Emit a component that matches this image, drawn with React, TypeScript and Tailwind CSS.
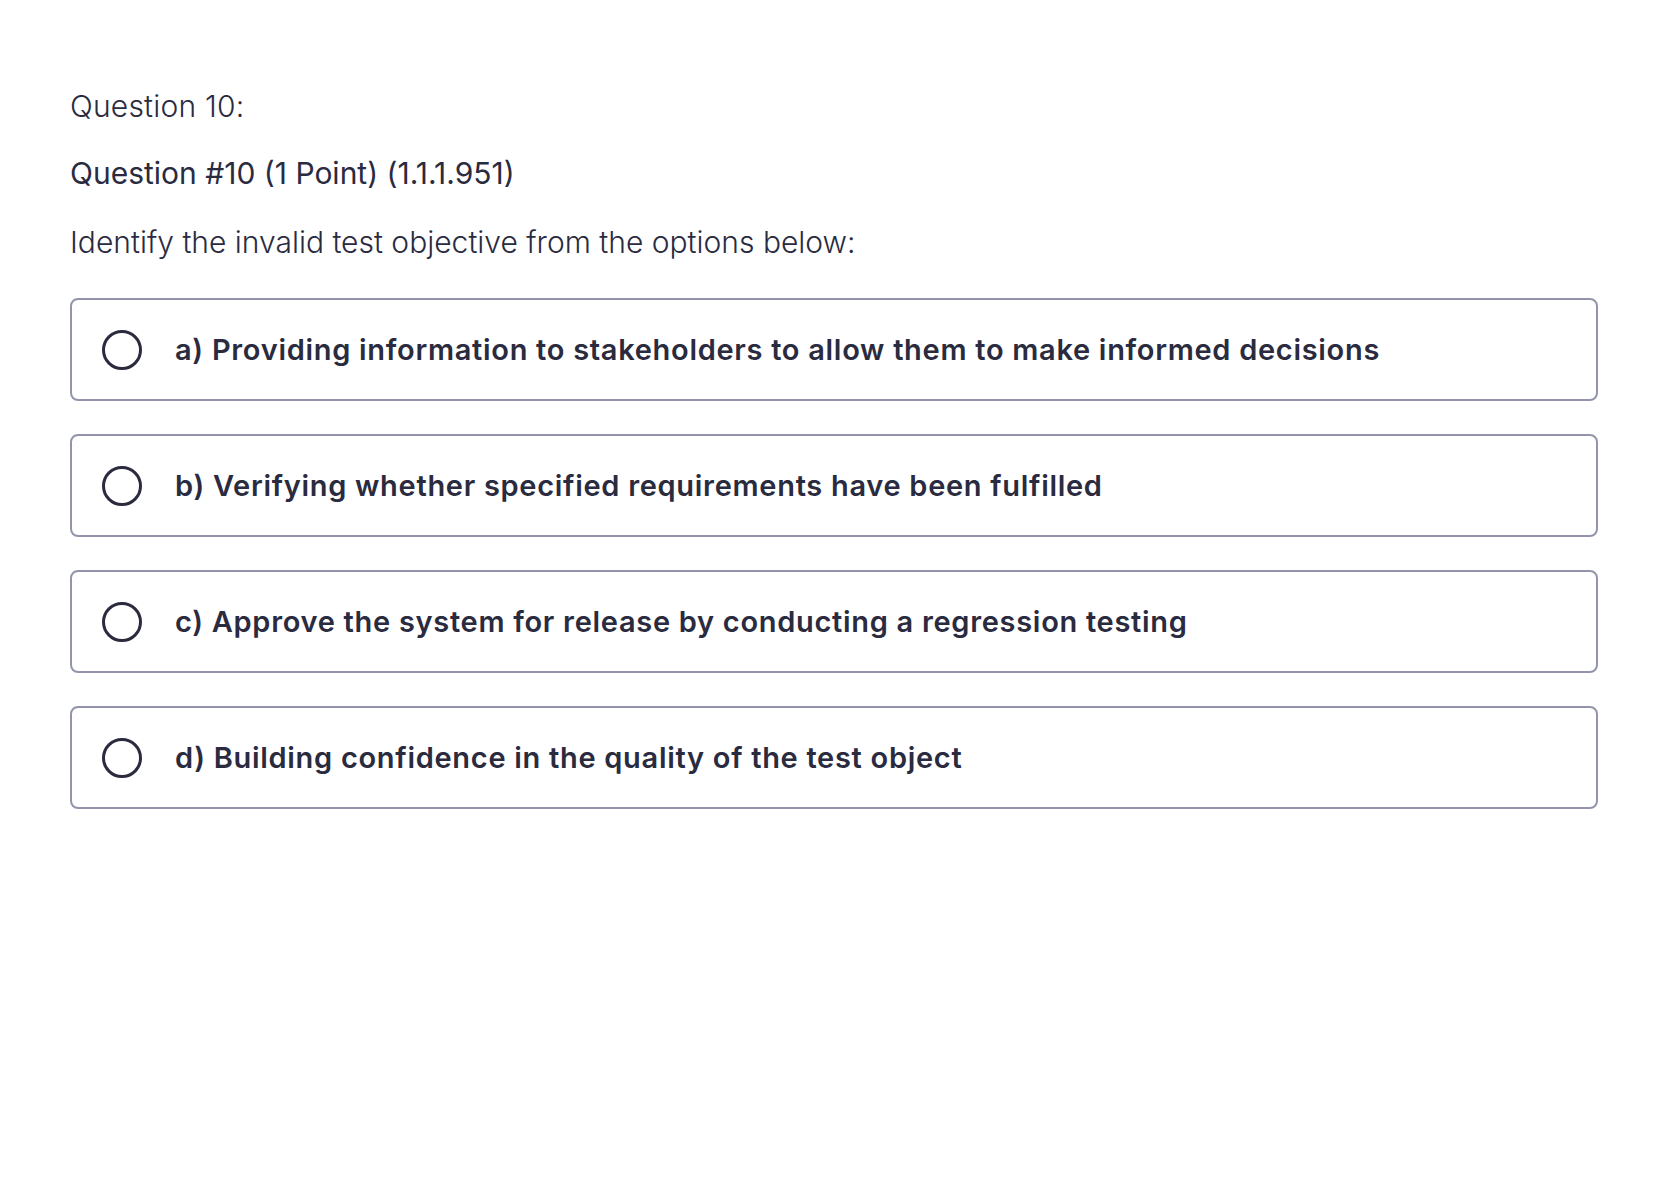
import React, { useState } from 'react';

const options = [
    { id: 'a', label: 'a) Providing information to stakeholders to allow them to make informed decisions' },
    { id: 'b', label: 'b) Verifying whether specified requirements have been fulfilled' },
    { id: 'c', label: 'c) Approve the system for release by conducting a regression testing' },
    { id: 'd', label: 'd) Building confidence in the quality of the test object' },
];

const App = () => {
    const [selected, setSelected] = useState<string | null>(null);

    return (
        <div className="bg-white min-h-screen text-[#2a2b3f]" style={{ fontFamily: 'Inter, "Noto Sans", sans-serif' }}>
            <div className="pl-[70px] pt-[86px] w-[1598px]">
                <p className="text-[30px] leading-[40px] font-light tracking-[0.2px]">Question 10:</p>
                <p className="mt-[27px] text-[30px] leading-[40px] font-normal">Question #10 (1 Point) (1.1.1.951)</p>
                <p className="mt-[29px] text-[30px] leading-[40px] font-light">Identify the invalid test objective from the options below:</p>

                <div className="mt-[36px] flex flex-col gap-[33px]">
                    {options.map((opt) => (
                        <label
                            key={opt.id}
                            onClick={() => setSelected(opt.id)}
                            className="flex items-center h-[103px] pl-[30px] border-2 border-[#9194ac] rounded-[8px] cursor-pointer"
                        >
                            <span className="w-[40px] h-[40px] rounded-full border-[3.5px] border-[#2a2b3f] flex items-center justify-center shrink-0">
                                {selected === opt.id && <span className="w-[18px] h-[18px] rounded-full bg-[#2a2b3f]" />}
                            </span>
                            <span className="ml-[33px] text-[29px] font-semibold tracking-[0.7px]">{opt.label}</span>
                        </label>
                    ))}
                </div>
            </div>
        </div>
    );
};

export default App;
